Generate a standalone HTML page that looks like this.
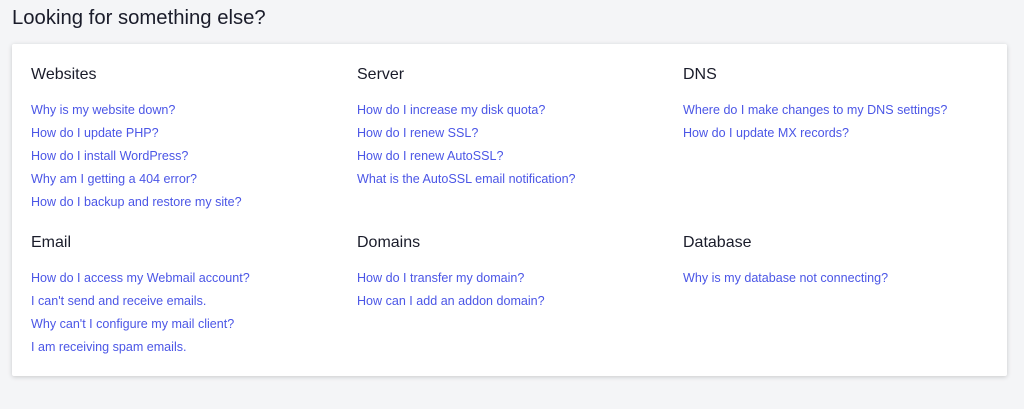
<!DOCTYPE html>
<html><head><meta charset="utf-8"><style>
body{margin:0;background:#f4f5f7;font-family:"Liberation Sans",sans-serif;width:1024px;height:409px;overflow:hidden}
h1{position:absolute;left:12px;top:7px;margin:0;font-size:20.3px;font-weight:normal;color:#1a1c2a}
.card{position:absolute;left:12px;top:44px;width:995px;height:332px;background:#fff;box-shadow:0 1px 5px rgba(0,0,0,.18);border-radius:2px}
.col{position:absolute;width:326px}
h2{margin:0;font-size:16px;font-weight:normal;color:#1a1c2a;line-height:20px}
ul{list-style:none;margin:14px 0 0;padding:0}
li{font-size:12.55px;line-height:23px;color:#4b56e6}
</style></head><body>
<h1>Looking for something else?</h1>
<div class="card">
<div class="col" style="left:19px;top:21px"><h2>Websites</h2><ul><li>Why is my website down?</li><li>How do I update PHP?</li><li>How do I install WordPress?</li><li>Why am I getting a 404 error?</li><li>How do I backup and restore my site?</li></ul></div>
<div class="col" style="left:345px;top:21px"><h2>Server</h2><ul><li>How do I increase my disk quota?</li><li>How do I renew SSL?</li><li>How do I renew AutoSSL?</li><li>What is the AutoSSL email notification?</li></ul></div>
<div class="col" style="left:671px;top:21px"><h2>DNS</h2><ul><li>Where do I make changes to my DNS settings?</li><li>How do I update MX records?</li></ul></div>
<div class="col" style="left:19px;top:189px"><h2>Email</h2><ul><li>How do I access my Webmail account?</li><li>I can't send and receive emails.</li><li>Why can't I configure my mail client?</li><li>I am receiving spam emails.</li></ul></div>
<div class="col" style="left:345px;top:189px"><h2>Domains</h2><ul><li>How do I transfer my domain?</li><li>How can I add an addon domain?</li></ul></div>
<div class="col" style="left:671px;top:189px"><h2>Database</h2><ul><li>Why is my database not connecting?</li></ul></div>
</div>
</body></html>
